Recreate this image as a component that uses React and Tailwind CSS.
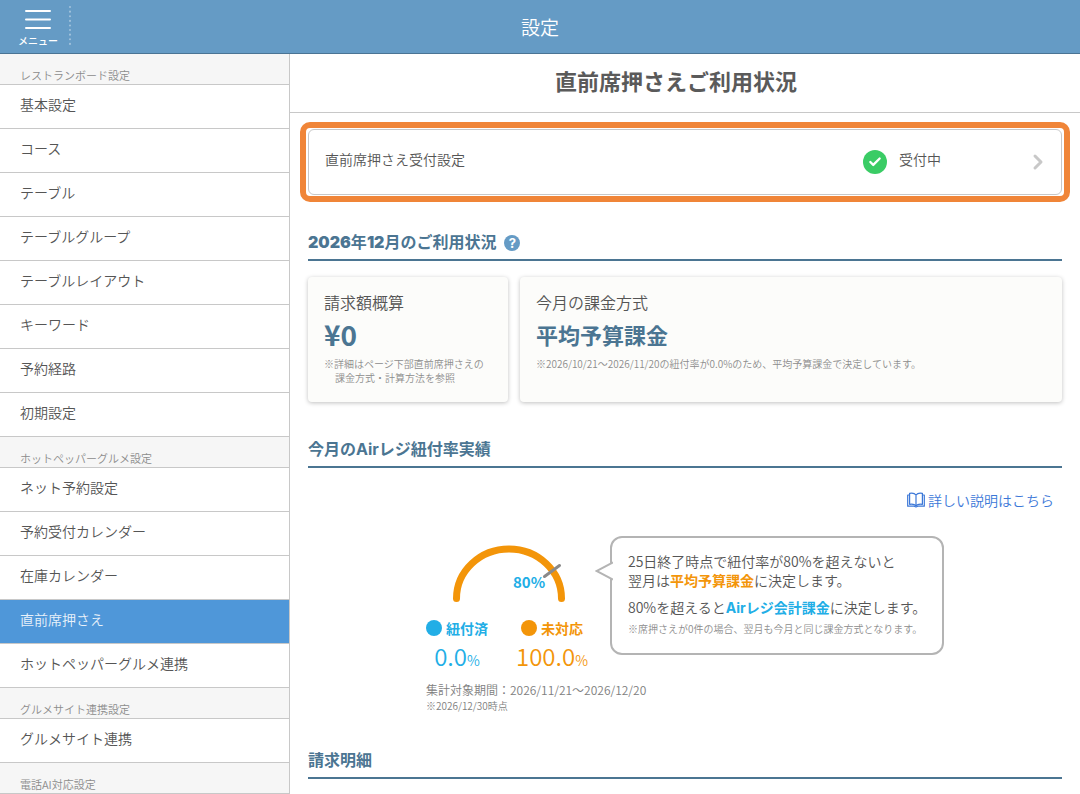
import { Check, ChevronRight } from 'lucide-react';

const menuGroups = [
  {
    title: 'レストランボード設定',
    items: ['基本設定', 'コース', 'テーブル', 'テーブルグループ', 'テーブルレイアウト', 'キーワード', '予約経路', '初期設定'],
  },
  {
    title: 'ホットペッパーグルメ設定',
    items: ['ネット予約設定', '予約受付カレンダー', '在庫カレンダー', '直前席押さえ', 'ホットペッパーグルメ連携'],
  },
  { title: 'グルメサイト連携設定', items: ['グルメサイト連携'] },
  { title: '電話AI対応設定', items: [] },
];

const current = '直前席押さえ';

function Header() {
  return (
    <header className="grid h-[54px] grid-cols-[1fr_auto_1fr] items-center border-b border-[#4a7494] bg-[#659bc5] text-white">
      <div className="flex h-full items-center">
        <button className="flex w-[69px] flex-col items-center gap-[3px] pt-1 pl-[7px] text-[10px] leading-[14px] font-medium">
          <svg width="26" height="22" viewBox="0 0 26 22" stroke="#fff" strokeWidth="2" strokeLinecap="round">
            <path d="M1 2h24M1 10.500h24M1 19h24" />
          </svg>
          メニュー
        </button>
        <svg width="2" height="40" viewBox="0 0 2 40" className="mb-1" stroke="#a3c3dd" strokeWidth="2" strokeLinecap="round">
          <path d="M1 2v37" strokeDasharray="0.1 4.5" />
        </svg>
      </div>
      <h1 className="pt-px text-[19px]">設定</h1>
    </header>
  );
}

function Sidebar() {
  return (
    <nav className="w-[290px] shrink-0 border-r border-[#c8c8c8]">
      {menuGroups.map(group => (
        <section key={group.title}>
          <h2 className="flex h-[31px] items-end border-b border-[#c8c8c8] bg-[#f6f6f6] pl-5 text-[11px] leading-[18px] text-[#8c8c8c]">
            {group.title}
          </h2>
          <ul>
            {group.items.map(item => (
              <li key={item}>
                <a
                  href="#"
                  className={
                    item === current
                      ? 'block h-11 border-b border-[#c8c8c8] bg-[#4f97d9] pl-5 text-sm leading-[38px] text-[#e8f1fa]'
                      : 'block h-11 border-b border-[#c8c8c8] bg-white pl-5 text-sm leading-[38px]'
                  }
                >
                  {item}
                </a>
              </li>
            ))}
          </ul>
        </section>
      ))}
    </nav>
  );
}

function SectionTitle({ children }) {
  return (
    <h3 className="flex h-[29px] items-start gap-2 border-b-2 border-[#4b7592] font-['Inter','Noto_Sans_CJK_JP',sans-serif] text-base leading-5 font-bold text-[#4b7592]">
      {children}
    </h3>
  );
}

function BookIcon() {
  return (
    <svg width="18" height="16" viewBox="0 0 18 16" fill="none" stroke="#3c78d8" strokeWidth="1.2" strokeLinejoin="round">
      <path d="M9 3C7.500 1 5 .8 2.600 1.300v11C5 11.800 7.500 12 9 14c1.500-2 4-2.200 6.400-1.700v-11C13 .8 10.500 1 9 3zM9 3v11" />
      <path d="M2.600 3H.7v11.200h6.500L9 15l1.800-.8h6.500V3h-1.900" />
    </svg>
  );
}

function Gauge() {
  return (
    <div className="relative h-[68px]">
      <svg width="114" height="62" viewBox="0 0 114 62" fill="none" strokeLinecap="round" className="mx-auto">
        <path d="M4.500 54.500A52.500 49.500 0 0 1 109.500 54.500" stroke="#f39509" strokeWidth="7" />
        <path d="M92.500 32.500L107.500 21.500" stroke="#8a8a8a" strokeWidth="3" />
      </svg>
      <span className="absolute top-7 left-[87px] text-[15px] leading-5 font-bold text-[#22aee6]">80%</span>
    </div>
  );
}

function Rate({ label, value, color, dot }) {
  return (
    <div className={'flex w-[62px] flex-col items-center ' + color}>
      <div className="flex items-center gap-1 text-sm leading-5 font-bold whitespace-nowrap">
        <span className={'size-4 shrink-0 rounded-full ' + dot}></span>
        {label}
      </div>
      <p className="text-2xl leading-9 whitespace-nowrap">
        {value}
        <span className="text-sm">%</span>
      </p>
    </div>
  );
}

function Balloon() {
  return (
    <div className="relative ml-[18px] h-[119px] w-[334px] rounded-xl border-2 border-[#b4b4b4] bg-white px-4 pt-[14px] text-sm leading-[19px] whitespace-nowrap">
      <svg width="18" height="20" viewBox="0 0 18 20" className="absolute top-[23px] -left-[17px]" fill="#fff" stroke="#b4b4b4" strokeWidth="2">
        <path d="M18 1.500L1.500 10L18 18.500" />
      </svg>
      <p>
        25日終了時点で紐付率が80%を超えないと
        <br />
        翌月は<strong className="text-[#f39509]">平均予算課金</strong>に決定します。
      </p>
      <p className="mt-2">
        80%を超えると
        <strong className="font-['Inter','Noto_Sans_CJK_JP',sans-serif] text-[#22aee6]">Airレジ会計課金</strong>
        に決定します。
      </p>
      <p className="mt-1 text-[10px] leading-4 text-[#8c8c8c]">※席押さえが0件の場合、翌月も今月と同じ課金方式となります。</p>
    </div>
  );
}

function Usage() {
  return (
    <div className="flex gap-3 px-[18px] pt-4">
      <section className="h-[125px] w-[200px] shrink-0 rounded-sm bg-[#fcfcfa] px-4 pt-4 shadow-[0_1px_4px_rgba(0,0,0,0.25)]">
        <h4 className="text-base leading-[18px]">請求額概算</h4>
        <p className="my-[3px] text-[28px] leading-10 font-bold text-[#4b7592]">¥0</p>
        <p className="pl-[11px] -indent-[11px] text-[10px] leading-[14px] whitespace-nowrap text-[#8c8c8c]">
          ※詳細はページ下部直前席押さえの
          <br />
          <span className="block indent-0">課金方式・計算方法を参照</span>
        </p>
      </section>
      <section className="h-[125px] grow rounded-sm bg-[#fcfcfa] px-4 pt-4 shadow-[0_1px_4px_rgba(0,0,0,0.25)]">
        <h4 className="text-base leading-[18px]">今月の課金方式</h4>
        <p className="my-[3px] text-[22px] leading-10 font-bold text-[#4b7592]">平均予算課金</p>
        <p className="text-[10px] leading-[14px] text-[#8c8c8c]">
          ※2026/10/21〜2026/11/20の紐付率が0.0%のため、平均予算課金で決定しています。
        </p>
      </section>
    </div>
  );
}

export default function App() {
  return (
    <div className="min-h-screen bg-white font-['Noto_Sans_CJK_JP',sans-serif] font-[350] text-[#555]">
      <Header />
      <div className="flex">
        <Sidebar />
        <main className="min-w-0 grow">
          <h2 className="h-[59px] border-b border-[#c8c8c8] pr-[18px] text-center text-[22px] leading-[52px] font-bold text-[#5a5a5a]">
            直前席押さえご利用状況
          </h2>

          <div className="mx-[10px] mt-[9px] rounded-[10px] border-6 border-[#f08538] px-[2px] py-px">
            <a href="#" className="flex h-[66px] items-center rounded-md border border-[#c8c8c8] px-4 text-sm">
              <span className="grow pb-[6px]">直前席押さえ受付設定</span>
              <span className="flex w-[163px] items-center gap-3">
                <span className="flex size-6 items-center justify-center rounded-full bg-[#3acc65]">
                  <Check size={14} color="#fff" strokeWidth={4} />
                </span>
                <span className="pb-[6px]">受付中</span>
              </span>
              <ChevronRight size={24} color="#c8c8c8" strokeWidth={3} className="-mr-[5px]" />
            </a>
          </div>

          <div className="px-[18px] pt-[30px]">
            <SectionTitle>
              <span>
                <span className="font-black">2026</span>年<span className="font-black">12</span>月のご利用状況
              </span>
              <button aria-label="ヘルプ" className="mt-[3px] size-4 rounded-full bg-[#659bc5] text-center text-[13px] leading-4 font-bold text-white">
                ?
              </button>
            </SectionTitle>
          </div>
          <Usage />

          <div className="px-[18px] pt-[37px]">
            <SectionTitle>今月のAirレジ紐付率実績</SectionTitle>
            <div className="flex justify-end pt-[22px] pr-2">
              <a href="#" className="flex items-center gap-[3px] text-sm leading-5 text-[#3c78d8]">
                <BookIcon />
                詳しい説明はこちら
              </a>
            </div>
            <div className="mx-auto mt-[26px] w-[518px]">
              <div className="flex">
                <div className="w-[166px] pt-2">
                  <Gauge />
                  <div className="mt-[6px] flex gap-[33px]">
                    <Rate label="紐付済" value="0.0" color="text-[#22aee6]" dot="bg-[#22aee6]" />
                    <Rate label="未対応" value="100.0" color="text-[#f39509]" dot="bg-[#f39509]" />
                  </div>
                </div>
                <Balloon />
              </div>
              <p className="mt-[7px] text-xs leading-[18px] text-[#808080]">集計対象期間：2026/11/21〜2026/12/20</p>
              <p className="text-[10px] leading-[14px] text-[#808080]">※2026/12/30時点</p>
            </div>
          </div>

          <div className="px-[18px] pt-[37px]">
            <SectionTitle>請求明細</SectionTitle>
          </div>
        </main>
      </div>
    </div>
  );
}
